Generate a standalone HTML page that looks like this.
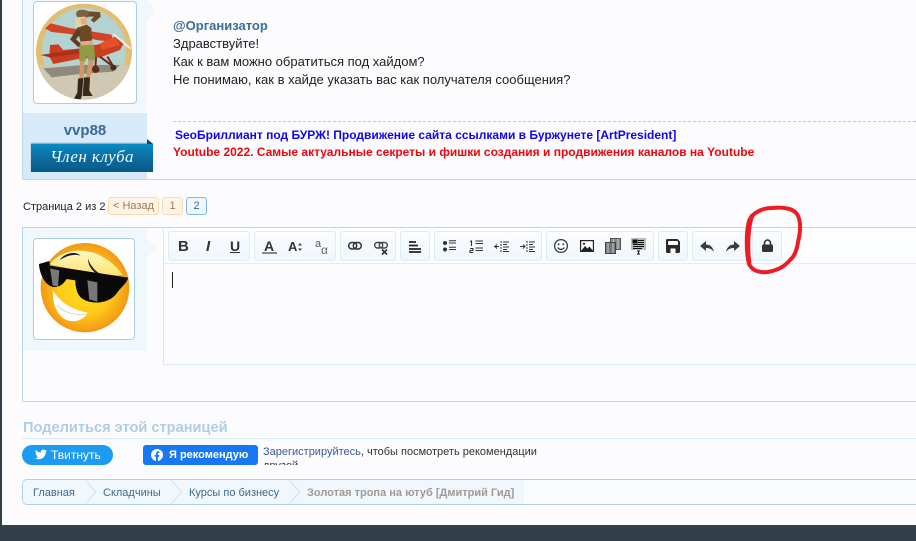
<!DOCTYPE html>
<html><head><meta charset="utf-8">
<style>
html,body{margin:0;padding:0;width:916px;height:541px;overflow:hidden;background:#fcfcff;}
body{position:relative;font-family:"Liberation Sans",Arial,sans-serif;font-size:13px;color:#222;}
.a{position:absolute;}
.t{position:absolute;white-space:nowrap;}
.g{position:absolute;top:231px;height:28px;border:1px solid #dcecf8;border-radius:3px;background:linear-gradient(#fcfdff,#eff7fd);box-sizing:content-box;}
svg{position:absolute;overflow:visible;}
</style></head><body>
<div class="a" style="left:0;top:0;width:2px;height:541px;background:#323e48"></div>
<div class="a" style="left:0;top:525px;width:916px;height:16px;background:#323e48"></div>

<!-- top message -->
<div class="a" style="left:22px;top:0;width:894px;height:180px;border-left:1px solid #c4d7e6;border-bottom:1px solid #c4d7e6;box-sizing:border-box"></div>
<div class="a" style="left:23px;top:113px;width:124px;height:66px;background:#d6eafa"></div>
<div class="a" style="left:23px;top:0;width:123px;height:113px;background:#f0f7fd;border-radius:0 0 4px 4px"></div>
<svg style="left:0;top:0" width="170" height="30"><path d="M146 0H147L156 11L147 21H146Z" fill="#f0f7fd"/></svg>
<div class="a" style="left:33px;top:1px;width:102px;height:101px;border:1px solid #a9cfe9;border-radius:4px;background:#fff"></div>
<svg style="left:20px;top:0" width="130" height="110" viewBox="0 0 390 330">
<defs><clipPath id="c1"><circle cx="192" cy="155" r="144"/></clipPath></defs>
<circle cx="192" cy="155" r="144" fill="#e3bd72"/>
<g clip-path="url(#c1)">
<circle cx="192" cy="150" r="126" fill="#b3d3d2"/>
<path d="M50 195H340V300H50Z" fill="#cfc8b2"/>
<path d="M70 205L190 195L300 195L280 215L180 222L95 232Z" fill="#8f8b7c"/>
<path d="M75 85L92 70L150 84L275 104L278 126L230 120L150 102L95 96Z" fill="#cf4526"/>
<path d="M90 135L115 133L130 150L175 146L240 132L285 110L312 128L300 150L240 172L180 176L100 192L88 170Z" fill="#c93e1f"/>
<path d="M62 165L175 148L180 160L90 172Z" fill="#a8301a"/>
<path d="M240 130L285 110L300 135L245 150Z" fill="#e2522a"/>
<path d="M280 102L332 146" stroke="#f0ece4" stroke-width="6"/>
<path d="M228 172L226 205M240 170L280 200M262 170L280 200" stroke="#6a2a18" stroke-width="6" fill="none"/>
<circle cx="227" cy="208" r="11" fill="#5c2a1a"/><circle cx="280" cy="203" r="9" fill="#4a2a1c"/>
<path d="M168 42C168 28 190 26 205 34L212 42L205 52L172 52Z" fill="#7c6240"/>
<path d="M205 34L240 36L242 50L222 68L212 60L222 50L206 50Z" fill="#6d4c2a"/>
<path d="M165 52L195 50L198 72L185 88L165 80Z" fill="#e6cfa2"/>
<path d="M180 56L200 54L200 72L186 74Z" fill="#e3ac80"/>
<path d="M170 84L200 74L214 84L216 122L182 126Z" fill="#6c4824"/>
<path d="M172 86L150 118L176 142L184 132L168 118L184 98Z" fill="#5d3d1d"/>
<path d="M184 124L216 122L220 136L180 138Z" fill="#dfac7e"/>
<path d="M178 136L222 134L226 180L205 182L200 165L196 184L178 184Z" fill="#8f9d49"/>
<path d="M180 184L194 184L190 236L178 236Z M206 182L222 180L210 234L198 234Z" fill="#d69766"/>
<path d="M174 236L190 234L186 285L182 298L162 296L172 278Z" fill="#33261a"/>
<path d="M192 232L210 232L208 272L218 288L188 288Z" fill="#3a2a1c"/>
</g>
</svg>
<div class="t" style="left:23px;top:122px;width:124px;text-align:center;font-size:15px;font-weight:bold;color:#3c6a94">vvp88</div>
<div class="a" style="left:147px;top:139px;width:0;height:0;border-bottom:5px solid #12476f;border-right:6px solid transparent"></div>
<div class="a" style="left:31px;top:144px;width:122px;height:28px;background:linear-gradient(#0a8ac4,#0c6a9c 55%,#075a86);box-shadow:0 -1px 1px rgba(60,60,60,.45)"></div>
<div class="t" style="left:31px;top:147px;width:122px;text-align:center;font-family:'Liberation Serif',serif;font-style:italic;font-size:17px;color:#f2f8fb;letter-spacing:.4px">Член клуба</div>

<div class="t" style="left:173px;top:18px;font-size:13px;font-weight:bold;color:#3a6e95">@Организатор</div>
<div class="t" style="left:173px;top:35px;font-size:13px;line-height:18px;color:#222">Здравствуйте!<br>Как к вам можно обратиться под хайдом?<br>Не понимаю, как в хайде указать вас как получателя сообщения?</div>
<div class="a" style="left:173px;top:121px;width:743px;border-top:1px dashed #bcccd8"></div>
<div class="t" style="left:175px;top:128px;font-size:12px;font-weight:bold;color:#0f06f0">SeoБриллиант под БУРЖ! Продвижение сайта ссылками в Буржунете [ArtPresident]</div>
<div class="t" style="left:173px;top:145px;font-size:12px;font-weight:bold;color:#f0060c">Youtube 2022. Самые актуальные секреты и фишки создания и продвижения каналов на Youtube</div>

<!-- pagination -->
<div class="t" style="left:23px;top:201px;font-size:11px;color:#222">Страница 2 из 2</div>
<div class="t" style="left:108px;top:197px;width:49px;height:16px;line-height:16px;text-align:center;font-size:11px;color:#a0785a;background:#fff4e6;border:1px solid #fbdcb0;border-radius:3px">&lt; Назад</div>
<div class="t" style="left:162px;top:197px;width:19px;height:16px;line-height:16px;text-align:center;font-size:11px;color:#a0785a;background:#fff4e6;border:1px solid #fbdcb0;border-radius:3px">1</div>
<div class="t" style="left:186px;top:197px;width:19px;height:16px;line-height:16px;text-align:center;font-size:11px;color:#3b6d93;background:#eff7fd;border:1px solid #7db9e6;border-radius:3px">2</div>

<!-- reply form -->
<div class="a" style="left:22px;top:227px;width:894px;height:175px;border:1px solid #bdd5e8;border-right:0;box-sizing:border-box"></div>
<div class="a" style="left:23px;top:228px;width:124px;height:123px;background:#f0f7fd"></div>
<div class="a" style="left:147px;top:238px;width:0;height:0;border-top:10px solid transparent;border-bottom:10px solid transparent;border-left:9px solid #f0f7fd"></div>
<div class="a" style="left:33px;top:238px;width:100px;height:100px;border:1px solid #a9cfe9;border-radius:4px;background:#fff"></div>
<svg style="left:0;top:225px" width="170" height="135" viewBox="0 0 510 405">
<defs><radialGradient id="s" cx=".5" cy=".5" r=".55"><stop offset="0" stop-color="#ffe21e"/><stop offset=".55" stop-color="#ffc81a"/><stop offset="1" stop-color="#ee8c14"/></radialGradient>
<linearGradient id="h" x1="0" y1="0" x2="0" y2="1"><stop offset="0" stop-color="#fff8c8"/><stop offset="1" stop-color="#ffe470"/></linearGradient></defs>
<ellipse cx="255" cy="188" rx="133" ry="134" fill="url(#s)"/>
<path d="M150 118C190 62 300 55 368 150L300 150Z" fill="url(#h)"/>
<path d="M178 106C195 82 228 78 242 92C222 86 200 92 178 106Z" fill="#1c1c1c"/>
<path d="M264 100C272 128 296 148 320 156C290 152 264 132 264 100Z" fill="#1c1c1c"/>
<path d="M117 117L148 108L150 122L385 158C380 175 360 190 350 205C325 240 262 240 240 215C228 200 226 178 226 166L200 162C192 175 180 187 160 186C135 182 118 145 117 117Z" fill="#0a0a0a"/>
<path d="M150 130L178 136L174 184L158 182Z" fill="#77777a"/>
<path d="M262 166L292 172L292 230L268 224Z" fill="#77777a"/>
<path d="M160 197C178 230 220 258 262 262C250 290 215 296 190 280C170 265 155 232 160 197Z" fill="#fff"/>
<path d="M172 240C190 262 225 272 255 268" stroke="#d5d5d5" stroke-width="3" fill="none"/>
</svg>

<div class="a" style="left:163px;top:227px;width:753px;height:138px;border-left:1px solid #d8e8f5;border-bottom:1px solid #d8e8f5;border-top:1px solid #bdd5e8;box-sizing:border-box;background:#fcfcff"></div>
<div class="a" style="left:164px;top:228px;width:752px;height:35px;background:#fbfdff;border-bottom:1px solid #deedf8;box-sizing:content-box"></div>

<div class="g" style="left:168px;width:80px"></div>
<div class="g" style="left:254px;width:80px"></div>
<div class="g" style="left:340px;width:54px"></div>
<div class="g" style="left:400px;width:28px"></div>
<div class="g" style="left:434px;width:106px"></div>
<div class="g" style="left:546px;width:106px"></div>
<div class="g" style="left:658px;width:28px"></div>
<div class="g" style="left:692px;width:60px"></div>
<div class="g" style="left:752px;width:28px"></div>

<!-- text icons -->
<div class="t" style="left:178px;top:238px;font:bold 15px 'Liberation Sans',sans-serif;color:#333">B</div>
<div class="t" style="left:206px;top:238px;font:italic bold 15px 'Liberation Sans',sans-serif;color:#333">I</div>
<div class="t" style="left:230px;top:238px;font:bold 14px 'Liberation Sans',sans-serif;color:#333;text-decoration:underline">U</div>
<div class="t" style="left:264px;top:238px;font:bold 14px 'Liberation Sans',sans-serif;color:#333">A</div>
<div class="a" style="left:262px;top:252px;width:15px;height:2px;background:#888"></div>
<div class="t" style="left:288px;top:239px;font:bold 13px 'Liberation Sans',sans-serif;color:#333">A</div>
<svg style="left:298px;top:243px" width="4" height="8"><path d="M0 2.5L2 0L4 2.5ZM0 5.5L2 8L4 5.5Z" fill="#444"/></svg>
<div class="t" style="left:315px;top:238px;font:11px 'Liberation Sans',sans-serif;color:#555">a</div>
<div class="t" style="left:321px;top:243px;font:12px 'Liberation Sans',sans-serif;color:#666">α</div>

<!-- links -->
<svg style="left:348px;top:241px" width="15" height="10" viewBox="0 0 15 10" fill="none" stroke="#333" stroke-width="1.5"><rect x=".7" y="1.5" width="8" height="6.5" rx="3.2"/><rect x="5.3" y="1.5" width="8" height="6.5" rx="3.2"/></svg>
<svg style="left:374px;top:241px" width="15" height="14" viewBox="0 0 15 14" fill="none" stroke="#444" stroke-width="1.4"><rect x=".7" y="1.5" width="8" height="5.5" rx="2.7"/><rect x="5.3" y="1.5" width="8" height="5.5" rx="2.7"/><path d="M8 8.5L13 13.5M13 8.5L8 13.5" stroke-width="1.7" stroke="#333"/></svg>
<!-- align -->
<svg style="left:409px;top:241px" width="12" height="12"><path d="M0 1h7M0 4.500h9M0 8h12M0 11h12" stroke="#222" stroke-width="1.8"/></svg>
<!-- lists -->
<svg style="left:443px;top:240px" width="14" height="12"><circle cx="2" cy="3" r="2" fill="#333"/><circle cx="2" cy="9.5" r="2" fill="#333"/><path d="M6 3h7M6 0.8h7M6 9.500h7M6 7.300h7" stroke="#333" stroke-width="1"/></svg>
<svg style="left:469px;top:240px" width="14" height="13"><path d="M1 1.500L2.500 1V6M1 8.500H4V10.500H1V12.500H4.200M6.500 1h7.500M6.500 3.500h7.500M6.500 8h7.500M6.500 10.500h7.500" stroke="#333" stroke-width="1.1" fill="none"/></svg>
<svg style="left:494px;top:241px" width="15" height="11"><path d="M7 0v11" stroke="#333" stroke-width="1" stroke-dasharray="2 1"/><path d="M9 1h6M9 3.500h4M9 6h6M9 8.500h4M9 10.500h6" stroke="#333" stroke-width="1"/><path d="M0 5.500h5M3 3.500L1 5.500l2 2" stroke="#333" fill="none"/></svg>
<svg style="left:520px;top:241px" width="15" height="11"><path d="M7 0v11" stroke="#333" stroke-width="1" stroke-dasharray="2 1"/><path d="M9 1h6M9 3.500h4M9 6h6M9 8.500h4M9 10.500h6" stroke="#333" stroke-width="1"/><path d="M0 5.500h5M3 3.500l2 2-2 2" stroke="#333" fill="none"/></svg>
<!-- media -->
<svg style="left:554px;top:239px" width="14" height="14" fill="none" stroke="#333" stroke-width="1.2"><circle cx="7" cy="7" r="6.4"/><circle cx="4.7" cy="5.3" r=".9" fill="#333" stroke="none"/><circle cx="9.3" cy="5.3" r=".9" fill="#333" stroke="none"/><path d="M3.800 8.500C5 11 9 11 10.200 8.500"/></svg>
<svg style="left:580px;top:240px" width="14" height="12"><rect x=".6" y=".6" width="12.8" height="10.8" fill="#fff" stroke="#222" stroke-width="1.2"/><path d="M1 11L5 6l2.500 2.500L9.500 6.500 13 11Z" fill="#222"/><circle cx="4" cy="3.8" r="1.1" fill="#222"/></svg>
<svg style="left:605px;top:238px" width="16" height="16"><rect x="5.5" y=".5" width="10" height="11" fill="#888" stroke="#555"/><rect x=".5" y="4.5" width="10" height="11" fill="#777" stroke="#444"/><path d="M3 5v10M8 5v10M8.500 1v3M13 1v10" stroke="#c8c8c8"/></svg>
<svg style="left:631px;top:238px" width="15" height="16"><rect width="15" height="12" fill="#bbb"/><path d="M2 2h4v3H2zM7 2.500h6M7 4.500h6M2 6.500h11M2 8.500h11M2 10.500h9" stroke="#111" fill="#111" stroke-width="1"/><path d="M6 13h3M7.500 13v3M6 16h3" stroke="#111"/></svg>
<!-- save -->
<svg style="left:666px;top:239px" width="14" height="14"><path d="M0 1.500Q0 0 1.500 0H11.500L14 2.500V12.500Q14 14 12.500 14H1.500Q0 14 0 12.500Z" fill="#2a2a2a"/><rect x="2" y="2" width="10" height="4" rx="1" fill="#fff"/><rect x="4.5" y="9.5" width="5" height="4.5" fill="#fff"/></svg>
<!-- undo/redo -->
<svg style="left:700px;top:241px" width="14" height="11"><path d="M6 0L0 5l6 5V7C9 7 12 8 14 11 13 6 10 3.500 6 3.500Z" fill="#3d3d3d"/></svg>
<svg style="left:726px;top:241px" width="14" height="11"><path d="M8 0l6 5-6 5V7C5 7 2 8 0 11 1 6 4 3.500 8 3.500Z" fill="#3d3d3d"/></svg>
<!-- lock -->
<svg style="left:762px;top:239px" width="11" height="13"><path d="M2.500 6V4a3 3 0 0 1 6 0v2" fill="none" stroke="#333" stroke-width="1.6"/><rect y="5.5" width="11" height="7.5" rx="1.2" fill="#333"/></svg>

<!-- red circle -->
<svg style="left:0;top:0" width="916" height="541" fill="none" stroke="#ed1c24" stroke-linejoin="round" stroke-linecap="round"><path d="M749 221C752 213 762 208 772 208C782 207 793 208 797 214C802 222 800 234 798 242C797 250 794 257 790 260C784 267 778 270 768 272C758 273 752 270 749 264C746 252 746 232 749 221Z" stroke-width="4"/><path d="M752 216C748 226 747 246 749 262" stroke-width="4.5"/></svg>

<div class="a" style="left:172px;top:272px;width:1px;height:16px;background:#222"></div>

<!-- share -->
<div class="t" style="left:23px;top:420px;font-size:14.6px;font-weight:bold;color:#aecde6">Поделиться этой страницей</div>
<div class="a" style="left:22px;top:438px;width:894px;height:1px;background:#d8eafa"></div>
<div class="a" style="left:22px;top:445px;width:91px;height:20px;border-radius:10px;background:#1d9bf0"></div>
<svg style="left:35px;top:449px" width="12" height="11" viewBox="0 0 24 20"><path d="M24 2.400a10 10 0 0 1-2.800.800A5 5 0 0 0 23.300.500a10 10 0 0 1-3.100 1.200 4.900 4.900 0 0 0-8.400 4.500A14 14 0 0 1 1.700.900a4.900 4.900 0 0 0 1.500 6.600 4.900 4.900 0 0 1-2.200-.600c0 2.400 1.700 4.400 3.900 4.900a5 5 0 0 1-2.200.100 4.900 4.900 0 0 0 4.600 3.400A10 10 0 0 1 0 17.300 14 14 0 0 0 7.500 19.500c9 0 14-7.500 14-14v-.600A10 10 0 0 0 24 2.400Z" fill="#fff"/></svg>
<div class="t" style="left:51px;top:445px;line-height:20px;font-size:12px;color:#fff">Твитнуть</div>
<div class="a" style="left:143px;top:445px;width:115px;height:20px;border-radius:3px;background:#1877f2"></div>
<svg style="left:151px;top:449px" width="12" height="12" viewBox="0 0 12 12"><circle cx="6" cy="6" r="6" fill="#fff"/><path d="M5 12V7.800H3.600V6H5V4.700C5 3.200 5.900 2.400 7.200 2.400c.6 0 1.200.1 1.200.1V4h-.7c-.7 0-.9.400-.9.900V6h1.500l-.3 1.800H6.800V12Z" fill="#1877f2"/></svg>
<div class="t" style="left:169px;top:445px;line-height:20px;font-size:11px;font-weight:bold;color:#fff">Я рекомендую</div>
<div class="t" style="left:263px;top:446px;font-size:11px;color:#333"><span style="color:#3b5998">Зарегистрируйтесь</span>, чтобы посмотреть рекомендации</div>
<div class="a" style="left:263px;top:459px;width:300px;height:6px;overflow:hidden"><div style="font-size:11px;line-height:14px;color:#333;margin-top:0">друзей</div></div>

<!-- breadcrumb -->
<div class="a" style="left:22px;top:479px;width:894px;height:26px;border:1px solid #b0d0e8;border-right:0;border-radius:5px 0 0 5px;box-sizing:border-box;background:#fafcff"></div>
<div class="a" style="left:23px;top:480px;width:501px;height:24px;background:#f0f7fd;border-radius:4px 0 0 4px"></div>
<div class="t" style="left:33px;top:487px;font-size:11px;color:#3f6a8c">Главная</div>
<div class="t" style="left:103px;top:487px;font-size:11px;color:#3f6a8c">Складчины</div>
<div class="t" style="left:189px;top:487px;font-size:11px;color:#3f6a8c">Курсы по бизнесу</div>
<div class="t" style="left:307px;top:487px;font-size:11px;font-weight:bold;color:#a09a98">Золотая тропа на ютуб [Дмитрий Гид]</div>
<svg style="left:0;top:0" width="916" height="541" fill="none" stroke="#cfe3f4"><path d="M85 480L96 492L85 504M171 480L182 492L171 504M289 480L300 492L289 504"/></svg>
</body></html>
